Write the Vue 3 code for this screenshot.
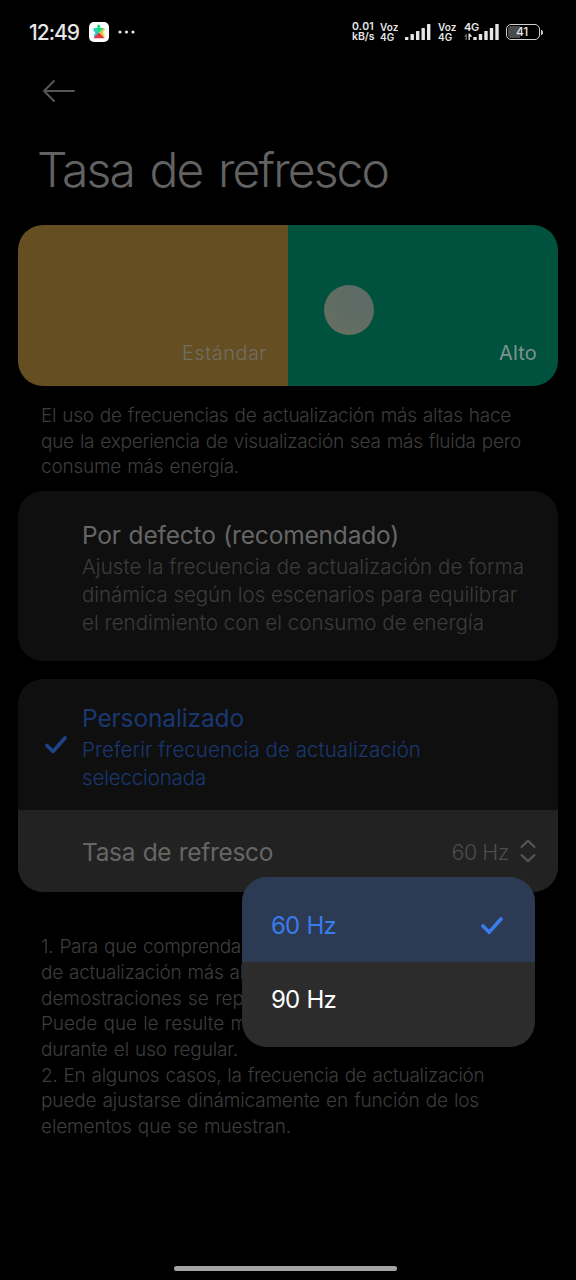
<script setup>
import { ref } from 'vue'

// Spreads the letters of a line so that it takes exactly the given width.
const vFit = {
  mounted(el, { value }) {
    const count = el.textContent.length
    const natural = el.getBoundingClientRect().width
    el.style.letterSpacing = `${(value - natural) / count}px`
  },
}

const intro = [
  ['El uso de frecuencias de actualización más altas hace', 470],
  ['que la experiencia de visualización sea más fluida pero', 480],
  ['consume más energía.', 198],
]
const defaultMode = [
  ['Ajuste la frecuencia de actualización de forma', 442],
  ['dinámica según los escenarios para equilibrar', 435],
  ['el rendimiento con el consumo de energía', 402],
]
const customMode = [
  ['Preferir frecuencia de actualización', 339],
  ['seleccionada', 124],
]
const notes = [
  ['1. Para que comprenda', 200],
  ['de actualización más al', 203],
  ['demostraciones se rep', 203],
  ['Puede que le resulte m', 206],
  ['durante el uso regular.', 197],
  ['2. En algunos casos, la frecuencia de actualización', 443.5],
  ['puede ajustarse dinámicamente en función de los', 438],
  ['elementos que se muestran.', 250],
]
const selected = ref('60 Hz')
const rates = ['60 Hz', '90 Hz']
const bars = [3, 6, 9, 12, 16]
</script>

<template>
  <div class="screen">
    <div class="status">
      <span v-fit="50" class="clock">12:49</span>
      <svg class="app-icon" width="20" height="20" viewBox="0 0 20 20">
        <rect width="20" height="20" rx="5" fill="#fff" />
        <path d="M4.500 6h3.700V4a1.500 1.500 0 0 1 3 0v2h4l-5.200 5z" fill="#1fd98a" />
        <path d="M4.500 6L10 11l-5 5V12.500h1.200v-3H4.500z" fill="#1fc3cf" />
        <path d="M15.500 6v3h-1.200v3.500h1.200V16L10 11z" fill="#e9c92a" />
        <path d="M10 10.500L15.500 16.200H4.500z" fill="#e2353c" />
      </svg>
      <svg class="dots" width="17" height="4" viewBox="0 0 17 4" fill="#e6e6e6">
        <circle cx="2" cy="2" r="1.600" /><circle cx="8.500" cy="2" r="1.600" /><circle cx="15" cy="2" r="1.600" />
      </svg>
      <div class="tiny speed"><b v-fit="22">0.01</b><b v-fit="22.500">kB/s</b></div>
      <div class="tiny volte"><b v-fit="18.500">Voz</b><b v-fit="14.500">4G</b></div>
      <svg class="signal" width="26" height="16" viewBox="0 0 26 16" fill="#e6e6e6">
        <rect v-for="(h, i) in bars" :key="i" :x="i * 5.500" :y="16 - h" width="3.400" :height="h" rx=".6" />
      </svg>
      <div class="tiny volte second"><b v-fit="18.500">Voz</b><b v-fit="14.500">4G</b></div>
      <div class="mobile">
        <b v-fit="15" class="net">4G</b>
        <svg width="35" height="18" viewBox="0 0 35 18" fill="#e6e6e6">
          <rect v-for="(h, i) in bars" :key="i" :x="9.300 + i * 5.500" :y="17 - h" width="3.400" :height="h" rx=".6" />
          <path d="M2.800 10.500V17H1.600v-3.500H0z" fill="#777" />
          <path d="M4.500 17v-6.500h1.300l2.500 3.300H5.800V17z" />
        </svg>
      </div>
      <div class="battery"><i></i><b v-fit="12">41</b></div>
      <i class="nub"></i>
    </div>

    <svg class="back" width="34" height="24" viewBox="0 0 34 24" fill="none" stroke="#555" stroke-width="2" stroke-linecap="round" stroke-linejoin="round">
      <path d="M12 2L2 12l10 10M2 12h30" />
    </svg>
    <h1><span v-fit="351">Tasa de refresco</span></h1>

    <div class="demo">
      <div class="half standard"><span v-fit="85">Estándar</span></div>
      <div class="half high"><i class="ball"></i><span v-fit="38">Alto</span></div>
    </div>

    <div class="text intro">
      <div v-for="[line, w] in intro" :key="line"><span v-fit="w">{{ line }}</span></div>
    </div>

    <section class="card default">
      <h2><span v-fit="317">Por defecto (recomendado)</span></h2>
      <div v-for="[line, w] in defaultMode" :key="line" class="desc"><span v-fit="w">{{ line }}</span></div>
    </section>

    <section class="card custom">
      <div class="choice">
        <svg class="tick" width="22" height="18" viewBox="0 0 22 18" fill="none" stroke="#1d4489" stroke-width="3.600" stroke-linecap="round" stroke-linejoin="round">
          <path d="M2 9.500l6 6L20 2" />
        </svg>
        <h2><span v-fit="162">Personalizado</span></h2>
        <div v-for="[line, w] in customMode" :key="line" class="desc"><span v-fit="w">{{ line }}</span></div>
      </div>
      <div class="rate">
        <h2><span v-fit="191">Tasa de refresco</span></h2>
        <span class="value"><span v-fit="57.500">{{ selected }}</span></span>
        <svg width="16" height="24" viewBox="0 0 16 24" fill="none" stroke="#575757" stroke-width="2" stroke-linecap="round" stroke-linejoin="round">
          <path d="M1.500 8L8 1.800 14.500 8M1.500 16L8 22.200 14.500 16" />
        </svg>
      </div>
    </section>

    <div class="text notes">
      <div v-for="[line, w] in notes" :key="line"><span v-fit="w">{{ line }}</span></div>
    </div>

    <div class="menu">
      <div v-for="rate in rates" :key="rate" class="option" :class="{ active: rate === selected }" @click="selected = rate">
        <span v-fit="65">{{ rate }}</span>
        <svg v-if="rate === selected" width="22" height="18" viewBox="0 0 22 18" fill="none" stroke="#397cec" stroke-width="3.600" stroke-linecap="round">
          <path d="M2 9l6.200 6.200L20 2" />
        </svg>
      </div>
    </div>

    <div class="home"></div>
  </div>
</template>

<style>
html,
body {
  background: #000;
}
</style>

<style scoped>
.screen {
  position: relative;
  display: flex;
  flex-direction: column;
  width: 576px;
  height: 1280px;
  overflow: hidden;
  box-sizing: border-box;
  padding: 0 18px;
  background: #000;
  font-family: Inter, Roboto, "Liberation Sans", sans-serif;
  font-weight: 300;
  white-space: nowrap;
}
h1,
h2 {
  margin: 0;
  font-weight: 300;
}
.status {
  display: flex;
  align-items: center;
  height: 64px;
  margin: 0 -18px;
  padding-left: 29px;
  color: #e6e6e6;
}
.clock {
  font-size: 21px;
  font-weight: 500;
}
.app-icon {
  margin-left: 10px;
}
.dots {
  margin-left: 9px;
}
.tiny {
  display: flex;
  flex-direction: column;
  width: 23px;
  font-size: 10.500px;
  line-height: 10.500px;
}
.tiny b,
.net,
.battery b {
  align-self: flex-start;
  font-weight: 600;
}
.speed {
  margin-left: 217px;
}
.volte {
  width: 19px;
  margin-left: 5px;
  font-size: 10px;
  line-height: 10px;
}
.signal {
  margin-left: 6px;
}
.second {
  margin-left: 7px;
}
.mobile {
  display: flex;
  flex-direction: column;
  position: relative;
  width: 35px;
  margin-left: 7px;
}
.net {
  position: absolute;
  top: -1px;
  left: 0;
  font-size: 11px;
  line-height: 10px;
}
.battery {
  display: flex;
  position: relative;
  box-sizing: border-box;
  width: 34px;
  height: 16px;
  margin-left: 7px;
  padding-left: 9px;
  border: 1.500px solid #d0d0d0;
  border-radius: 5px;
}
.battery i {
  position: absolute;
  inset: 1px 19px 1px 1px;
  border-radius: 3px 0 0 3px;
  background: #4a4a4a;
}
.battery b {
  position: relative;
  font-size: 12px;
  font-weight: 500;
  line-height: 14px;
}
.nub {
  width: 2px;
  height: 5px;
  margin-left: 1px;
  border-radius: 0 2px 2px 0;
  background: #d0d0d0;
}
.back {
  margin: 15px 0 0 24px;
}
h1 {
  height: 64px;
  margin: 35px 0 23px 19px;
  color: #626262;
  font-size: 48px;
  line-height: 64px;
  word-spacing: 4px;
}
.demo {
  display: flex;
  height: 160.500px;
  border-radius: 25px;
  overflow: hidden;
}
.half {
  display: flex;
  position: relative;
  flex: 1;
  align-items: flex-end;
  justify-content: flex-end;
  box-sizing: border-box;
  padding: 0 21px 21px 0;
  font-size: 20px;
  line-height: 24px;
}
.standard {
  background: #654f22;
  color: #706e63;
}
.high {
  background: #00523f;
  color: #7d928d;
}
.half span {
  font-weight: 400;
}
.standard span {
  font-weight: 350;
}
.ball {
  position: absolute;
  top: 59.500px;
  left: 36px;
  width: 50px;
  height: 50px;
  border-radius: 50%;
  background: radial-gradient(circle at 62% 33%, #5b6b67, #606c63 45%, #68705f 90%);
}
.text {
  padding-left: 23px;
  color: #3d3d3d;
  font-size: 19px;
  line-height: 25.650px;
  word-spacing: 1px;
}
.intro {
  margin-top: 17.500px;
}
.card {
  box-sizing: border-box;
  border-radius: 25px;
  background: #0f0f0f;
  overflow: hidden;
}
.card h2 {
  color: #666;
  font-size: 24.500px;
  line-height: 33px;
  font-weight: 400;
  word-spacing: 1px;
}
.desc {
  position: relative;
  top: 1px;
  font-size: 20.500px;
  line-height: 27.800px;
  color: #3c3c3c;
}
.default {
  height: 170.500px;
  margin-top: 11px;
  padding: 28.500px 0 0 64px;
}
.custom {
  height: 213px;
  margin-top: 17.500px;
}
.choice {
  position: relative;
  box-sizing: border-box;
  height: 131px;
  padding: 23px 0 0 64px;
}
.choice h2,
.choice .desc {
  color: #193871;
}
.tick {
  position: absolute;
  top: 57px;
  left: 27px;
}
.rate {
  display: flex;
  align-items: center;
  box-sizing: border-box;
  height: 82px;
  padding: 3px 22px 0 64px;
  background: #222;
}
.value {
  margin-left: auto;
  margin-right: 11px;
  color: #4d4d4d;
  font-size: 21.500px;
}
.rate svg {
  margin-top: -3px;
}
.notes {
  margin-top: 42.500px;
}
.menu {
  position: absolute;
  top: 877px;
  left: 242px;
  width: 293px;
  height: 170px;
  border-radius: 25px;
  background: #2c2c2c;
  overflow: hidden;
}
.option {
  display: flex;
  align-items: center;
  justify-content: space-between;
  box-sizing: border-box;
  height: 85px;
  padding: 0 32px 10px 29px;
  color: #fff;
  font-size: 24px;
  font-weight: 400;
  word-spacing: 1px;
}
.active {
  padding: 12px 32px 0 29px;
  background: #2c3a53;
  color: #397cec;
}
.home {
  position: absolute;
  left: 174px;
  bottom: 9px;
  width: 223px;
  height: 5px;
  border-radius: 3px;
  background: #a5a5a5;
}
</style>
